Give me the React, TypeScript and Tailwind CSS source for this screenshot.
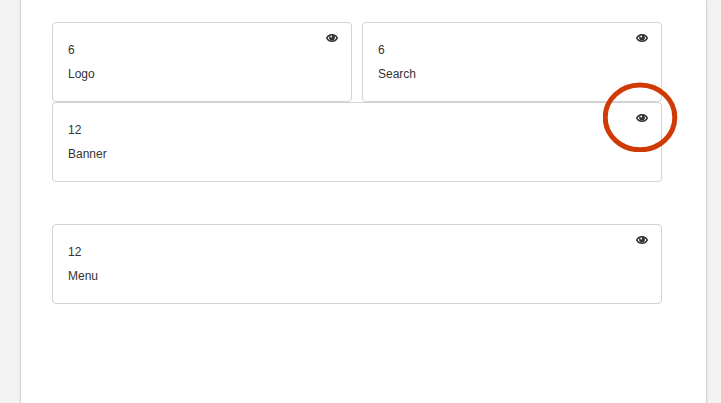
import React from "react";

interface GridCardProps {
  span: number;
  name: string;
  highlighted?: boolean;
}

const EyeIcon: React.FC = () => (
  <svg viewBox="0 0 24 16" className="h-2 w-3" aria-hidden="true">
    <path
      d="M1.4 8.2C3.4 3.8 7.2 1.5 12 1.5S20.6 3.8 22.6 8.2C20.4 12.2 16.8 14.5 12 14.5S3.6 12.2 1.4 8.2Z"
      fill="none"
      stroke="#333333"
      strokeWidth="2.8"
    />
    <circle cx="12" cy="7" r="5.8" fill="#333333" />
    <circle cx="10.4" cy="5" r="1.9" fill="#ffffff" />
  </svg>
);

const HighlightRing: React.FC = () => (
  <svg
    viewBox="0 0 75 70"
    className="pointer-events-none absolute -top-[21px] -right-[17px] z-10 h-[70px] w-[75px]"
    aria-hidden="true"
  >
    <ellipse
      cx="37"
      cy="35.4"
      rx="34.8"
      ry="32.4"
      fill="none"
      stroke="#cf3a05"
      strokeWidth="5"
    />
  </svg>
);

const GridCard: React.FC<GridCardProps> = ({ span, name, highlighted }) => (
  <section className="relative flex-1 rounded border border-[#d3d3d3] p-[15px]">
    <p>{span}</p>
    <p>{name}</p>
    <button
      type="button"
      aria-label={`Toggle ${name}`}
      className="absolute top-[11px] right-[13px] flex cursor-pointer"
    >
      <EyeIcon />
    </button>
    {highlighted && <HighlightRing />}
  </section>
);

export default function App() {
  return (
    <div className="min-h-screen bg-[#f3f3f3] pr-[14px] pl-5 font-['Liberation_Sans',Arial,sans-serif] text-xs leading-6 text-[#333333]">
      <main className="min-h-screen border-x border-[#d3d3d3] bg-white pt-[22px] pr-11 pl-[31px] shadow-[0_0_3px_rgba(0,0,0,0.08)]">
        <div className="flex gap-[10px]">
          <GridCard span={6} name="Logo" />
          <GridCard span={6} name="Search" />
        </div>
        <div className="flex">
          <GridCard span={12} name="Banner" highlighted />
        </div>
        <div className="mt-[42px] flex">
          <GridCard span={12} name="Menu" />
        </div>
      </main>
    </div>
  );
}
